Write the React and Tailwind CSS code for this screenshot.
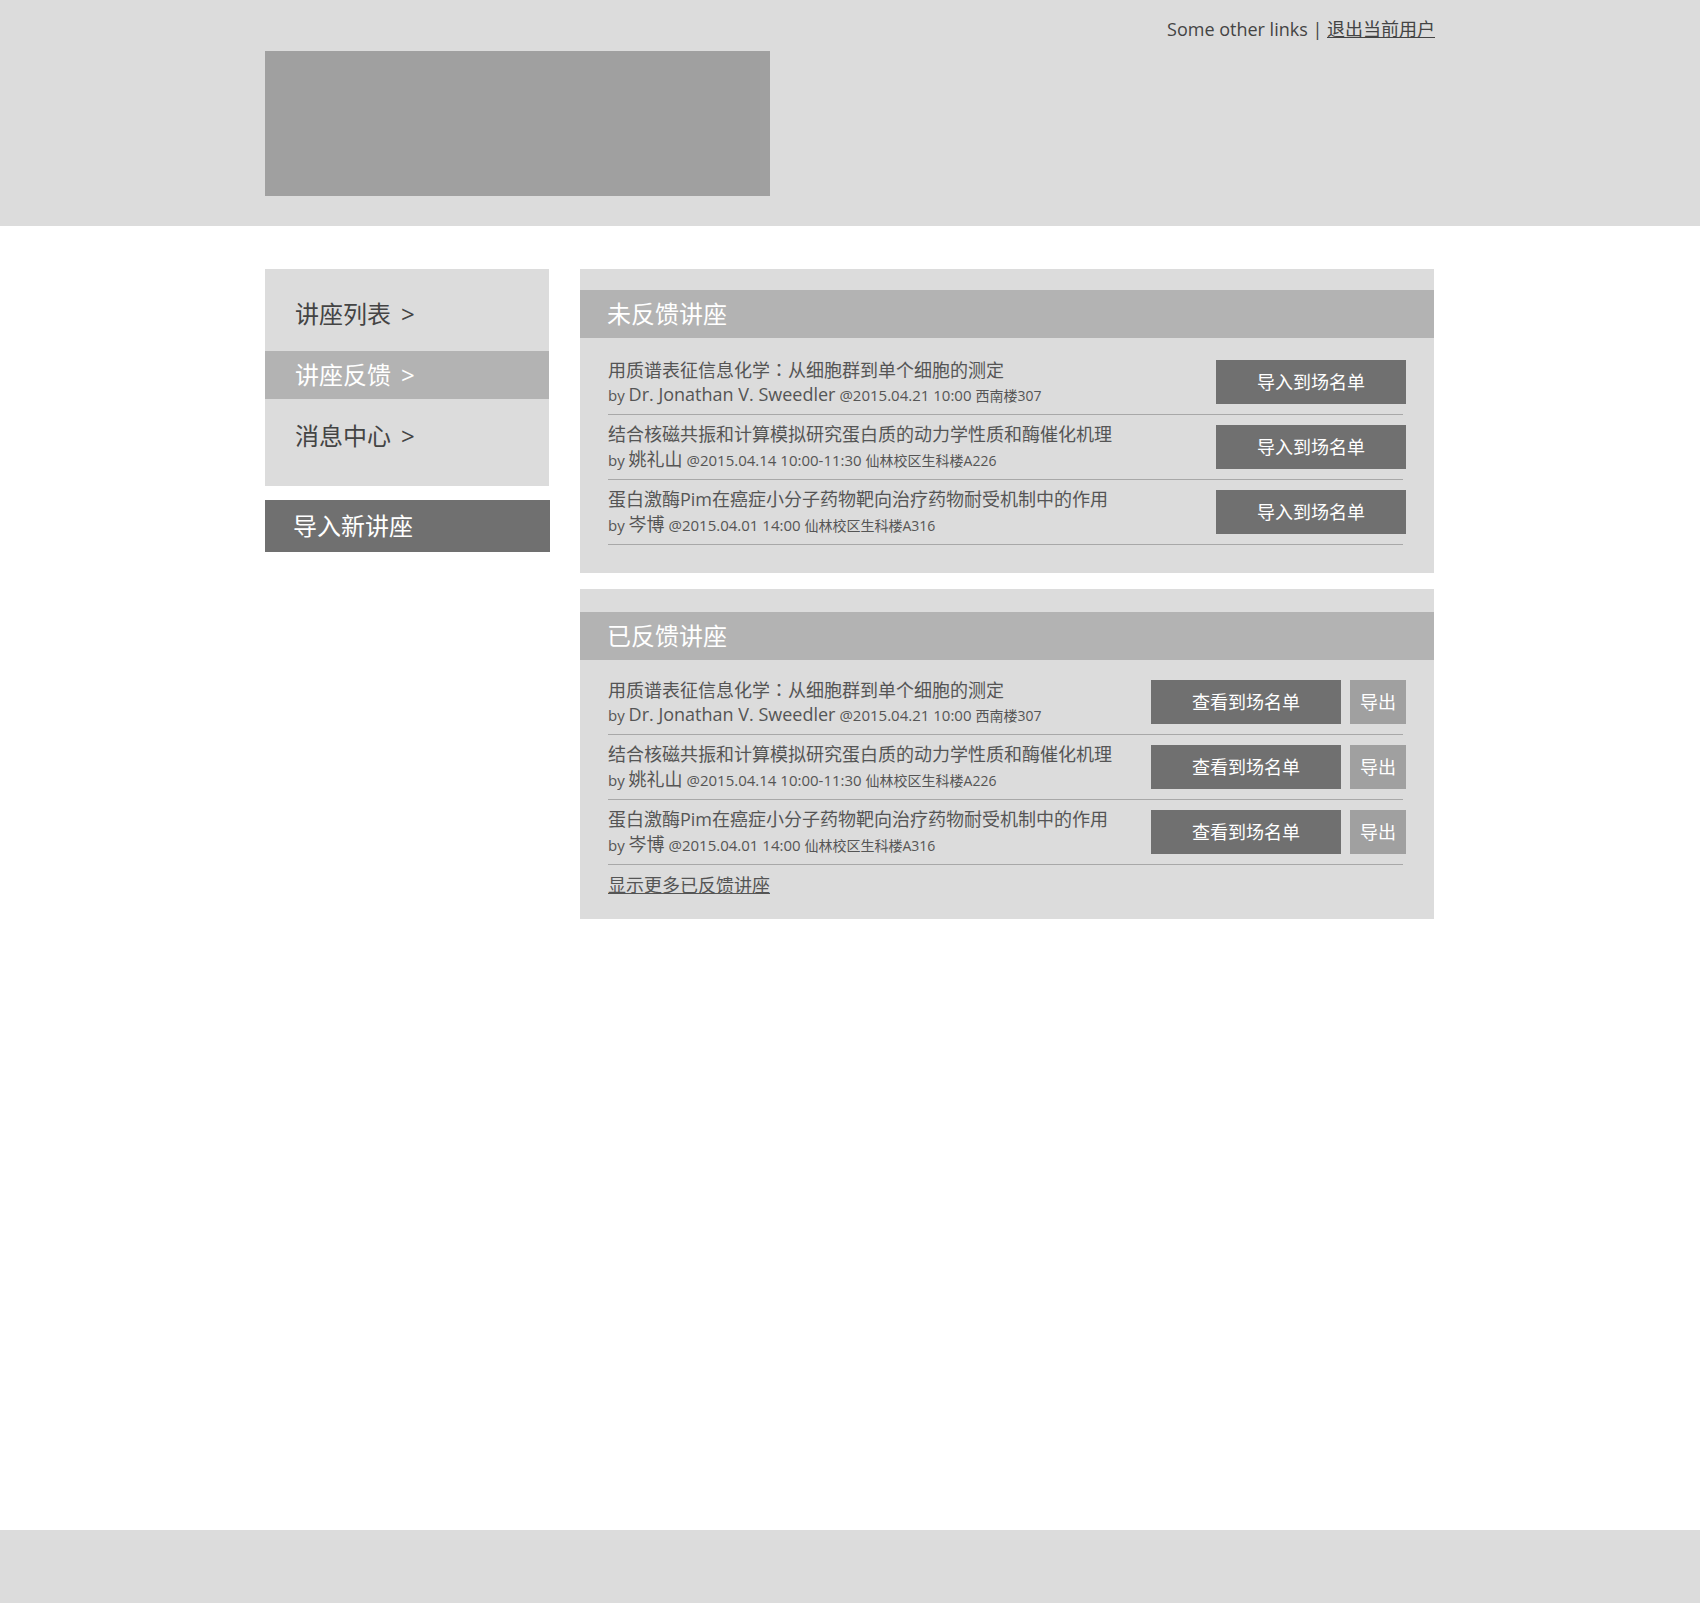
import React from 'react';

const pending = [
  {
    title: ['用质谱表征信息化学', '：', '从细胞群到单个细胞的测定'],
    speaker: 'Dr. Jonathan V. Sweedler',
    time: '@2015.04.21 10:00',
    place: '西南楼307',
  },
  {
    title: ['结合核磁共振和计算模拟研究蛋白质的动力学性质和酶催化机理'],
    speaker: '姚礼山',
    time: '@2015.04.14 10:00-11:30',
    place: '仙林校区生科楼A226',
  },
  {
    title: ['蛋白激酶Pim在癌症小分子药物靶向治疗药物耐受机制中的作用'],
    speaker: '岑博',
    time: '@2015.04.01 14:00',
    place: '仙林校区生科楼A316',
  },
];

function LectureInfo({ lecture }) {
  const [before, colon, after] = lecture.title;
  return (
    <div className="flex flex-col text-[#555]">
      <div className="h-[25px] text-[18px] leading-[25px] whitespace-nowrap">
        {before}
        {colon && <span style={{ fontFamily: '"Noto Sans CJK TC", sans-serif' }}>{colon}</span>}
        {after}
      </div>
      <div className="h-[25px] leading-[25px] whitespace-nowrap flex items-baseline">
        <span className="text-[15px] leading-[25px]">by&nbsp;</span>
        <span className="text-[18px] leading-[25px]">{lecture.speaker}</span>
        <span className="text-[15px] leading-[25px]">&nbsp;{lecture.time}&nbsp;</span>
        <span className="text-[14px] leading-[25px]">{lecture.place}</span>
      </div>
    </div>
  );
}

export default function App() {
  return (
    <div
      className="min-h-[1603px] flex flex-col bg-white"
      style={{ fontFamily: '"Open Sans", "Noto Sans CJK SC", sans-serif' }}
    >
      {/* Header */}
      <header className="h-[226px] bg-[#dcdcdc]">
        <div className="w-[1170px] mx-auto">
          <div className="h-[51px] pt-[16px] text-right text-[18px] leading-[26px] text-[#444]">
            Some other links | <a href="#" className="underline">退出当前用户</a>
          </div>
          <div className="w-[505px] h-[145px] bg-[#a0a0a0]" />
        </div>
      </header>

      {/* Main */}
      <main className="flex-1">
        <div className="w-[1170px] mx-auto pt-[43px] flex gap-[31px] items-start">
          <aside className="w-[284px]">
            <nav className="bg-[#dcdcdc] pt-[21px] pb-[26px] flex flex-col gap-[13px]">
              <a href="#" className="h-[48px] pl-[30px] flex items-center gap-[10px] text-[24px] text-[#444]">讲座列表<span>&gt;</span></a>
              <a href="#" className="h-[48px] pl-[30px] flex items-center gap-[10px] text-[24px] text-white bg-[#b3b3b3]">讲座反馈<span>&gt;</span></a>
              <a href="#" className="h-[48px] pl-[30px] flex items-center gap-[10px] text-[24px] text-[#444]">消息中心<span>&gt;</span></a>
            </nav>
            <button className="mt-[14px] h-[52px] w-[285px] bg-[#707070] text-white text-[24px] pl-[28px] text-left">
              导入新讲座
            </button>
          </aside>

          <section className="w-[854px] flex flex-col gap-[16px]">
            {/* Pending feedback */}
            <div className="bg-[#dcdcdc] pt-[21px] pb-[28px]">
              <h2 className="h-[48px] bg-[#b3b3b3] px-[27px] flex items-center text-[24px] text-white">未反馈讲座</h2>
              <div className="pl-[28px] pr-[31px] pt-[12px]">
                {pending.map((lecture, i) => (
                  <div key={i} className="h-[65px] border-b border-[#a8a8a8] flex items-center justify-between">
                    <LectureInfo lecture={lecture} />
                    <button className="mr-[-3px] w-[190px] h-[44px] bg-[#707070] text-white text-[18px]">
                      导入到场名单
                    </button>
                  </div>
                ))}
              </div>
            </div>

            {/* Done feedback */}
            <div className="bg-[#dcdcdc] pt-[23px] pb-[21px]">
              <h2 className="h-[48px] bg-[#b3b3b3] px-[27px] flex items-center text-[24px] text-white">已反馈讲座</h2>
              <div className="pl-[28px] pr-[31px] pt-[10px]">
                {pending.map((lecture, i) => (
                  <div key={i} className="h-[65px] border-b border-[#a8a8a8] flex items-center justify-between">
                    <LectureInfo lecture={lecture} />
                    <div className="mr-[-3px] flex gap-[9px]">
                      <button className="w-[190px] h-[44px] bg-[#707070] text-white text-[18px]">查看到场名单</button>
                      <button className="w-[56px] h-[44px] bg-[#a0a0a0] text-white text-[18px]">导出</button>
                    </div>
                  </div>
                ))}
                <div className="pt-[7px]">
                  <a href="#" className="text-[18px] leading-[26px] text-[#555] underline">显示更多已反馈讲座</a>
                </div>
              </div>
            </div>
          </section>
        </div>
      </main>

      {/* Footer */}
      <footer className="h-[73px] bg-[#dcdcdc]" />
    </div>
  );
}
